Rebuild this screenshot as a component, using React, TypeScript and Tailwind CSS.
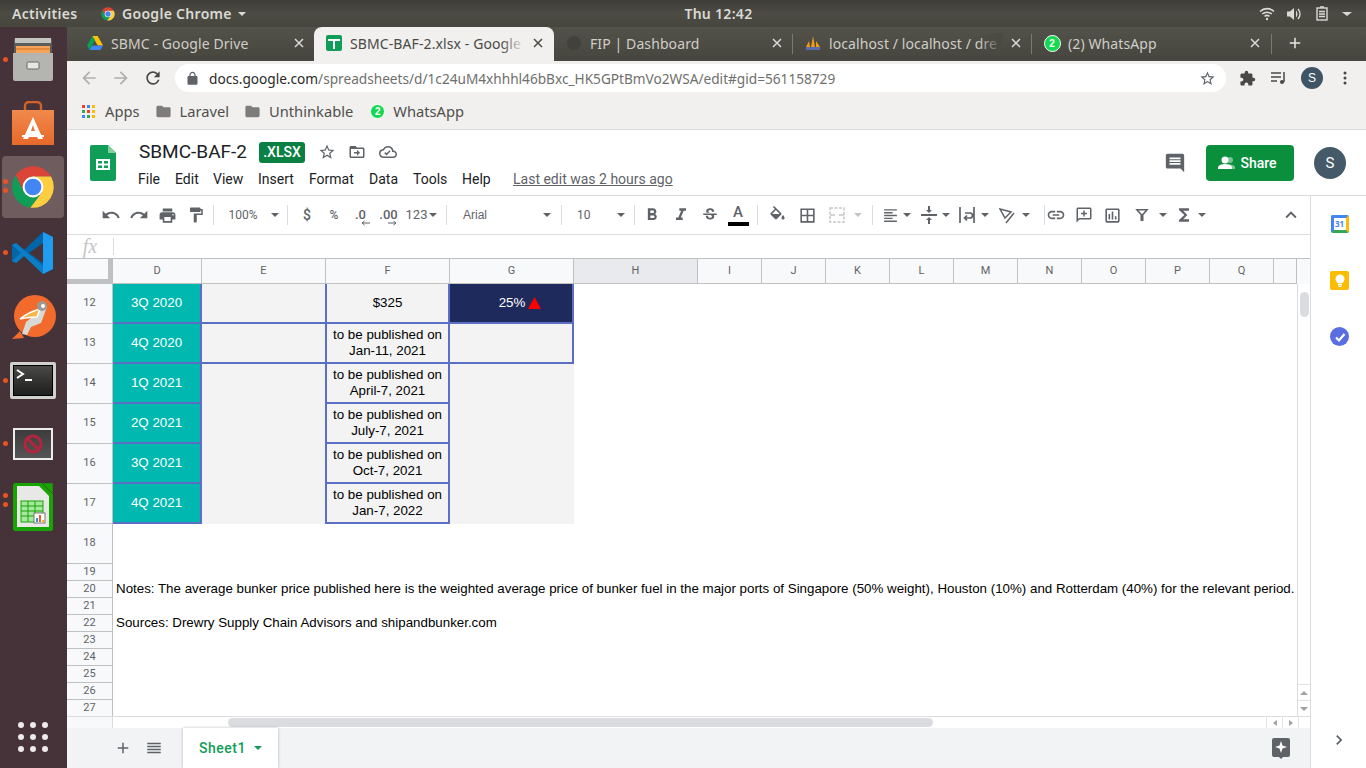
import React from 'react';

const ubuntu = "font-['Noto_Sans',sans-serif]";
const roboto = "font-['Roboto',sans-serif]";
const arial = "font-['Liberation_Sans',Arial,sans-serif]";

function M({ d, size = 18, className = '' }: { d: string; size?: number; className?: string }) {
  const color = className.includes('text-') ? '' : 'text-[#5f6368]';
  return (
    <svg width={size} height={size} viewBox="0 0 24 24" fill="currentColor" className={`shrink-0 ${color} ${className}`}>
      <path d={d} />
    </svg>
  );
}

function Caret({ className = 'border-t-[#5f6368]' }: { className?: string }) {
  return <div className={`w-0 h-0 shrink-0 border-x-[4px] border-x-transparent border-t-[4px] ${className}`} />;
}

function Box({ w, children }: { w: string; children?: React.ReactNode }) {
  return <div className={`${w} shrink-0 flex items-center justify-center`}>{children}</div>;
}

function Sep({ w }: { w: string }) {
  return (
    <div className={`${w} shrink-0 flex items-center justify-center`}>
      <div className="w-px h-[20px] bg-[#dadce0]" />
    </div>
  );
}

function ChromeLogo({ size }: { size: number }) {
  return (
    <svg width={size} height={size} viewBox="0 0 48 48" className="shrink-0">
      <path fill="#db4437" d="M24 14L41.32 14A20 20 0 0 0 7.5 12.7L15.3 29Z" />
      <path fill="#0f9d58" d="M15.3 29L7.5 12.7A20 20 0 0 0 21.5 43.8L32.66 29Z" />
      <path fill="#ffcd40" d="M32.66 29L21.5 43.8A20 20 0 0 0 41.32 14L24 14Z" />
      <circle cx="24" cy="24" r="10" fill="#fff" />
      <circle cx="24" cy="24" r="8" fill="#4285f4" />
    </svg>
  );
}

function WhatsAppBadge({ size }: { size: number }) {
  return (
    <div
      className={`shrink-0 rounded-full bg-[#12d94f] border-[1.5px] border-white flex items-center justify-center text-white text-[10px] font-bold ${arial} ${size === 18 ? 'w-[17px] h-[17px]' : 'w-[15px] h-[15px]'}`}
    >
      2
    </div>
  );
}

function TopBar() {
  return (
    <div className={`h-[27px] shrink-0 flex items-center bg-gradient-to-b from-[#3e3d38] via-[#4c4b44] to-[#46453e] text-[#dbdad4] text-[14px] font-semibold tracking-[0.3px] ${ubuntu}`}>
      <span className="ml-[12px] w-[88px]">Activities</span>
      <ChromeLogo size={16} />
      <span className="ml-[6px]">Google Chrome</span>
      <Caret className="ml-[6px] border-t-[#dbdad4]" />
      <div className="flex-1 flex justify-center pr-[56px]">
        <span className="ml-[-12px]">Thu 12:42</span>
      </div>
      <svg width="16" height="14" viewBox="0 0 16 14" className="shrink-0 mr-[12px]" fill="none" stroke="#dbdad4" strokeWidth="1.6">
        <path d="M1 4.500a10 10 0 0 1 14 0M3.300 7a7 7 0 0 1 9.400 0M5.600 9.400a3.600 3.600 0 0 1 4.800 0" />
        <circle cx="8" cy="12" r="1.2" fill="#dbdad4" stroke="none" />
      </svg>
      <svg width="16" height="14" viewBox="0 0 16 14" className="shrink-0 mr-[13px]" fill="#dbdad4">
        <path d="M0 4.500h3L7 1v12L3 9.500H0z" />
        <path d="M9 3.500a5 5 0 0 1 0 7zM11.500 1.500a8 8 0 0 1 0 11l-1-1a6.500 6.500 0 0 0 0-9z" />
      </svg>
      <svg width="12" height="15" viewBox="0 0 12 15" className="shrink-0 mr-[14px]" fill="none" stroke="#dbdad4" strokeWidth="1.4">
        <rect x="1" y="2" width="10" height="12" />
        <path d="M4 1h4M3 5.500h6M3 8h6M3 10.500h6" />
      </svg>
      <Caret className="mr-[14px] border-t-[#dbdad4] border-x-[5px]" />
    </div>
  );
}

function Dot({ top }: { top: string }) {
  return <div className={`absolute left-[3px] w-[5px] h-[5px] rounded-full bg-[#e95420] ${top}`} />;
}

function Dock() {
  return (
    <div className="w-[67px] shrink-0 bg-[#46333a] flex flex-col items-stretch pb-[15px] pr-[2px]">
      <div className="relative h-[63px] flex items-center justify-center">
        <Dot top="top-[30px]" />
        <svg width="42" height="44" viewBox="0 0 42 44">
          <rect x="2" y="1" width="38" height="20" rx="2" fill="#5c5c58" />
          <rect x="3" y="1" width="36" height="5" fill="#c4c4c0" />
          <rect x="4" y="9" width="34" height="7" fill="#f3a35c" />
          <rect x="4" y="11" width="34" height="2" fill="#e68a3c" />
          <path d="M1 16h40v26a2 2 0 0 1-2 2H3a2 2 0 0 1-2-2z" fill="#b4b4b0" />
          <rect x="15" y="25" width="12" height="7" rx="1" fill="#e6e6e2" stroke="#666" strokeWidth="1" />
        </svg>
      </div>
      <div className="h-[65px] flex items-center justify-center">
        <svg width="42" height="44" viewBox="0 0 42 44">
          <defs>
            <linearGradient id="bag" x1="0" y1="0" x2="0" y2="1">
              <stop offset="0" stopColor="#f08a4c" />
              <stop offset="1" stopColor="#e8682a" />
            </linearGradient>
          </defs>
          <path d="M13 10V5a4 4 0 0 1 4-4h8a4 4 0 0 1 4 4v5" fill="none" stroke="#d4602a" strokeWidth="2.400" />
          <path d="M0 9h42v35H0z" fill="url(#bag)" />
          <path d="M21 16l10 22h-5l-1.500-4h-7L16 38h-5zM21 24l-2 6h4z" fill="#fff" />
          <rect x="10" y="34" width="22" height="2" fill="#fff" />
        </svg>
      </div>
      <div className="h-[65px] flex items-center justify-center relative">
        <Dot top="top-[24px]" />
        <Dot top="top-[33px]" />
        <div className="w-[62px] h-[62px] rounded-[4px] bg-[#6f5c5f] flex items-center justify-center mb-[1px]">
          <ChromeLogo size={50} />
        </div>
      </div>
      <div className="relative h-[65px] flex items-center justify-center">
        <Dot top="top-[30px]" />
        <svg width="44" height="44" viewBox="0 0 44 44">
          <path fill="#0065a9" d="M32 1L13 19 5 12 1 14v16l4 2 8-7 19 18 10-5V6zM32 12v20L18 22z" fillRule="evenodd" />
          <path fill="#0c7dc4" d="M1 14l4-2 27 23v8L13 25l-8 7-4-2 9-8z" />
          <path fill="#1f9cf0" d="M32 1l10 5v32l-10 5z" />
        </svg>
      </div>
      <div className="h-[64px] flex items-center justify-center">
        <svg width="46" height="46" viewBox="0 0 46 46">
          <circle cx="25" cy="22" r="21" fill="#f26b2c" />
          <path d="M2 45l8-8 4 7z" fill="#f26b2c" />
          <path d="M12 40l4-12 10-8 5-9 6 2-6 16-10 4-4 8z" fill="#d8d8d4" />
          <path d="M10 25c6-5 12-8 20-10l-3 8c-6 0-12 1-17 2z" fill="#f7b64a" stroke="#fff" strokeWidth="1.500" />
          <circle cx="32" cy="12" r="5" fill="#9a9a96" />
          <circle cx="33" cy="12" r="2" fill="#fff" />
        </svg>
      </div>
      <div className="relative h-[63px] flex items-center justify-center">
        <Dot top="top-[29px]" />
        <div className="w-[46px] h-[37px] bg-[#d0d0cc] rounded-[2px] p-[3px]">
          <div className="w-full h-full bg-gradient-to-b from-[#4a4a48] to-[#1e1e1e] border border-black flex items-start">
            <svg width="20" height="20" viewBox="0 0 20 20">
              <path d="M3 4l6 4-6 4" fill="none" stroke="#fff" strokeWidth="2" />
              <path d="M11 14h7" stroke="#fff" strokeWidth="2" />
            </svg>
          </div>
        </div>
      </div>
      <div className="relative h-[63px] flex items-center justify-center">
        <Dot top="top-[29px]" />
        <div className="w-[40px] h-[32px] bg-[#ececea] p-[2px]">
          <div className="w-full h-full bg-gradient-to-b from-[#3c3c3c] to-[#555] flex items-center justify-center">
            <svg width="20" height="20" viewBox="0 0 20 20" fill="none" stroke="#b5243e" strokeWidth="3">
              <circle cx="10" cy="10" r="8" />
              <path d="M4.500 4.500l11 11" />
            </svg>
          </div>
        </div>
      </div>
      <div className="relative h-[63px] flex items-center justify-center">
        <Dot top="top-[18px]" />
        <Dot top="top-[27px]" />
        <svg width="40" height="48" viewBox="0 0 40 48">
          <path d="M2 0h27l11 11v35a2 2 0 0 1-2 2H2a2 2 0 0 1-2-2V2a2 2 0 0 1 2-2z" fill="#18a303" />
          <path d="M4 3h22l10 10v31H4z" fill="#e8e8e6" />
          <path d="M29 0h11v11z" fill="#18a303" stroke="#46333a" strokeWidth="0.5" />
          <rect x="8" y="18" width="22" height="21" fill="#a5e8a0" stroke="#18a303" strokeWidth="1" />
          <path d="M8 23h22M8 28h22M8 33h22M15 18v21M22 18v21" stroke="#18a303" strokeWidth="1" />
          <rect x="21" y="30" width="11" height="10" fill="#fff" stroke="#777" strokeWidth="1" />
          <rect x="23" y="35" width="2" height="4" fill="#3c8cd0" />
          <rect x="26" y="32" width="2" height="7" fill="#e8632a" />
          <rect x="29" y="37" width="2" height="2" fill="#e8b52a" />
        </svg>
      </div>
      <div className="mt-auto self-center grid grid-cols-3 gap-[6px] mb-[1px]">
        {Array.from({ length: 9 }).map((_, i) => (
          <div key={i} className="w-[6px] h-[6px] rounded-full bg-[#ecebea]" />
        ))}
      </div>
    </div>
  );
}

function Tab({ title, icon, active, sep, width, fade, first }: { title: string; icon: React.ReactNode; active?: boolean; sep?: boolean; width: string; fade?: boolean; first?: boolean }) {
  return (
    <div className={`${width} shrink-0 h-[34px] flex items-center pb-[2px] ${first ? 'pl-[20px] pr-[10px]' : 'pl-[12px] pr-[11px]'} ${active ? 'bg-[#f1f0ee] rounded-t-[8px] text-[#4a4a46]' : 'text-[#cfcec8]'} relative`}>
      <div className="w-[16px] flex justify-center shrink-0">{icon}</div>
      <div className="relative ml-[8px] flex-1 overflow-hidden whitespace-nowrap">
        {title}
        {fade && <div className={`absolute right-0 top-0 bottom-0 w-[24px] bg-gradient-to-r ${active ? 'from-transparent to-[#f1f0ee]' : 'from-transparent to-[#4a4942]'}`} />}
      </div>
      <svg width="10" height="10" viewBox="0 0 10 10" className="ml-[8px] shrink-0" stroke={active ? '#4a4a46' : '#dcdbd6'} strokeWidth="1.500">
        <path d="M1 1l8 8M9 1l-8 8" />
      </svg>
      {sep && <div className="absolute right-0 top-[7px] w-px h-[20px] bg-[#7a7972]" />}
    </div>
  );
}

function TabStrip() {
  return (
    <div className={`h-[34px] shrink-0 flex bg-gradient-to-b from-[#53524a] to-[#46453e] text-[14px] tracking-[0.1px] ${ubuntu}`}>
      <Tab
        first
        width="w-[247px]"
        title="SBMC - Google Drive"
        icon={
          <svg width="16" height="15" viewBox="0 0 16 15">
            <path d="M5.300 0h5.400l5.300 9.500h-5.300z" fill="#ffc107" />
            <path d="M5.300 0L0 9.500 2.600 14 8 4.500z" fill="#0f9d58" />
            <path d="M2.600 14h10.800L16 9.500H5.300z" fill="#4285f4" />
          </svg>
        }
      />
      <Tab
        active
        fade
        width="w-[240px]"
        title="SBMC-BAF-2.xlsx - Google"
        icon={
          <div className="w-[16px] h-[16px] rounded-[2px] bg-[#0f9d58] flex items-center justify-center">
            <svg width="12" height="12" viewBox="0 0 12 12" fill="#fff">
              <path d="M0 2h12v2H7v8H5V4H0z" />
            </svg>
          </div>
        }
      />
      <Tab sep width="w-[239px]" title="FIP | Dashboard" icon={<div className="w-[14px] h-[14px] rounded-full bg-[#42413b]" />} />
      <Tab
        sep
        fade
        width="w-[239px]"
        title="localhost / localhost / dre"
        icon={
          <svg width="16" height="16" viewBox="0 0 16 16">
            <path d="M1 12L4 6l1 6zM6 12l2-11 2 11zM11 12l0-6 4 6z" fill="#f39c12" />
            <rect x="1" y="12" width="14" height="3" fill="#5b6bb0" />
          </svg>
        }
      />
      <Tab width="w-[239px]" title="(2) WhatsApp" icon={<WhatsAppBadge size={18} />} />
      <div className="w-px h-[20px] mt-[7px] bg-[#7a7972]" />
      <div className="ml-[14px] flex items-center pb-[2px]">
        <M size={18} className="text-[#e8e7e2]" d="M19 13h-6v6h-2v-6H5v-2h6V5h2v6h6z" />
      </div>
    </div>
  );
}

function NavBar() {
  return (
    <div className={`h-[34px] shrink-0 bg-[#f1f0ee] flex items-center text-[13.65px] ${ubuntu}`}>
      <M className="ml-[12px] text-[#b0afac]" size={20} d="M20 11H7.830l5.590-5.590L12 4l-8 8 8 8 1.410-1.410L7.830 13H20v-2z" />
      <M className="ml-[12px] text-[#b0afac]" size={20} d="M12 4l-1.410 1.410L16.170 11H4v2h12.170l-5.580 5.590L12 20l8-8z" />
      <M className="ml-[12px] text-[#484846]" size={20} d="M17.650 6.350A7.958 7.958 0 0 0 12 4c-4.420 0-7.990 3.580-7.990 8s3.570 8 7.990 8c3.730 0 6.840-2.550 7.730-6h-2.080A5.990 5.990 0 0 1 12 18c-3.310 0-6-2.690-6-6s2.690-6 6-6c1.660 0 3.140.690 4.220 1.780L13 11h7V4l-2.350 2.350z" />
      <div className="ml-[12px] w-[1051px] h-[28px] bg-white rounded-full flex items-center">
        <M className="ml-[10px] text-[#5f6368]" size={15} d="M18 8h-1V6c0-2.760-2.240-5-5-5S7 3.240 7 6v2H6c-1.100 0-2 .9-2 2v10c0 1.100.9 2 2 2h12c1.100 0 2-.9 2-2V10c0-1.100-.9-2-2-2zM9 6c0-1.660 1.340-3 3-3s3 1.340 3 3v2H9V6z" />
        <span className="ml-[9px] pt-[2px] whitespace-nowrap text-[#6f6f6c]">
          <span className="text-[#2a2a28]">docs.google.com</span>/spreadsheets/d/1c24uM4xhhhl46bBxc_HK5GPtBmVo2WSA/edit#gid=561158729
        </span>
        <M className="ml-auto mr-[10px] text-[#5f6368]" size={17} d="M22 9.240l-7.190-.62L12 2 9.190 8.630 2 9.240l5.460 4.730L5.820 21 12 17.270 18.180 21l-1.630-7.030L22 9.240zM12 15.400l-3.760 2.270 1-4.280-3.320-2.880 4.380-.38L12 6.100l1.710 4.040 4.380.38-3.320 2.880 1 4.280L12 15.400z" />
      </div>
      <M className="ml-[13px] text-[#484846]" size={17} d="M20.500 11H19V7c0-1.100-.9-2-2-2h-4V3.500a2.500 2.500 0 0 0-5 0V5H4c-1.100 0-1.990.9-1.990 2v3.800H3.500c1.490 0 2.700 1.210 2.700 2.700s-1.210 2.700-2.700 2.700H2V20c0 1.100.9 2 2 2h3.800v-1.500c0-1.490 1.210-2.700 2.700-2.700s2.700 1.210 2.700 2.700V22H17c1.100 0 2-.9 2-2v-4h1.500a2.500 2.500 0 0 0 0-5z" />
      <svg width="16" height="14" viewBox="0 0 16 14" className="ml-[15px] shrink-0" stroke="#484846" strokeWidth="1.500" fill="none">
        <path d="M0 2h10M0 6h10M0 10h6M13 1v10" />
        <circle cx="11" cy="11" r="2" fill="#484846" stroke="none" />
      </svg>
      <div className={`ml-[14px] w-[22px] h-[22px] rounded-full bg-[#3f5566] text-white text-[12px] flex items-center justify-center ${arial}`}>S</div>
      <svg width="4" height="14" viewBox="0 0 4 14" className="ml-[20px] shrink-0" fill="#484846">
        <circle cx="2" cy="2" r="1.500" />
        <circle cx="2" cy="7" r="1.500" />
        <circle cx="2" cy="12" r="1.500" />
      </svg>
    </div>
  );
}

function Folder({ className }: { className: string }) {
  return <M size={17} className={`text-[#7c7c7a] ${className}`} d="M10 4H4c-1.100 0-2 .9-2 2v12c0 1.100.9 2 2 2h16c1.100 0 2-.9 2-2V8c0-1.100-.9-2-2-2h-8l-2-2z" />;
}

function Bookmarks() {
  const dots = ['bg-[#ea4335]', 'bg-[#4285f4]', 'bg-[#fbbc05]', 'bg-[#34a853]', 'bg-[#ea4335]', 'bg-[#fbbc05]', 'bg-[#4285f4]', 'bg-[#34a853]', 'bg-[#fbbc05]'];
  return (
    <div className={`h-[35px] shrink-0 bg-[#f1f0ee] border-b border-[#dadce0] flex items-center pb-[2px] text-[14.7px] text-[#4f4f4c] ${ubuntu}`}>
      <div className="ml-[15px] grid grid-cols-3 gap-[2px]">
        {dots.map((c, i) => (
          <div key={i} className={`w-[3px] h-[3px] ${c}`} />
        ))}
      </div>
      <span className="ml-[10px]">Apps</span>
      <Folder className="ml-[15px]" />
      <span className="ml-[8px]">Laravel</span>
      <Folder className="ml-[15px]" />
      <span className="ml-[8px]">Unthinkable</span>
      <div className="ml-[17px]">
        <WhatsAppBadge size={15} />
      </div>
      <span className="ml-[8px]">WhatsApp</span>
    </div>
  );
}

function DocHeader() {
  const menus: [string, string][] = [
    ['File', 'w-[37px]'],
    ['Edit', 'w-[38px]'],
    ['View', 'w-[45px]'],
    ['Insert', 'w-[51px]'],
    ['Format', 'w-[60px]'],
    ['Data', 'w-[44px]'],
    ['Tools', 'w-[49px]'],
    ['Help', 'w-[51px]'],
  ];
  return (
    <div className={`h-[66px] shrink-0 bg-white border-b border-[#dadce0] flex items-start ${roboto}`}>
      <svg width="26" height="36" viewBox="0 0 26 36" className="ml-[23px] mt-[15px] shrink-0">
        <path d="M2 0h16l8 8v26a2 2 0 0 1-2 2H2a2 2 0 0 1-2-2V2a2 2 0 0 1 2-2z" fill="#0f9d58" />
        <path d="M18 0l8 8h-8z" fill="#87ce9b" />
        <path d="M6 14h14v11H6zM8 16v2.500h4V16zM14 16v2.500h4V16zM8 20.500V23h4v-2.500zM14 20.500V23h4v-2.500z" fill="#fff" fillRule="evenodd" />
      </svg>
      <div className="ml-[23px] flex-1">
        <div className="flex items-center h-[26px] mt-[9px]">
          <span className="text-[19px] leading-[24px] text-[#202124]">SBMC-BAF-2</span>
          <span className="ml-[12px] w-[46px] h-[21px] rounded-[3px] bg-[#0b8043] text-white text-[14px] font-medium flex items-center justify-center">.XLSX</span>
          <M className="ml-[13px]" size={18} d="M22 9.240l-7.190-.62L12 2 9.190 8.630 2 9.240l5.460 4.730L5.820 21 12 17.270 18.180 21l-1.630-7.030L22 9.240zM12 15.400l-3.760 2.270 1-4.280-3.320-2.880 4.380-.38L12 6.100l1.710 4.040 4.380.38-3.320 2.880 1 4.280L12 15.400z" />
          <M className="ml-[12px]" size={18} d="M20 6h-8l-2-2H4c-1.100 0-2 .9-2 2v12c0 1.100.9 2 2 2h16c1.100 0 2-.9 2-2V8c0-1.100-.9-2-2-2zm0 12H4V8h16v10zm-8-1l4-4-4-4v3H8v2h4v3z" />
          <M className="ml-[13px]" size={18} d="M19.350 10.040A7.490 7.490 0 0 0 12 4C9.110 4 6.600 5.640 5.350 8.040A5.994 5.994 0 0 0 0 14c0 3.310 2.690 6 6 6h13c2.760 0 5-2.240 5-5 0-2.640-2.050-4.780-4.650-4.960zM19 18H6c-2.210 0-4-1.790-4-4s1.790-4 4-4h.71C7.370 7.690 9.480 6 12 6c3.040 0 5.500 2.460 5.500 5.500v.5H19c1.660 0 3 1.340 3 3s-1.340 3-3 3zm-9-1.500l-3-3 1.400-1.400 1.600 1.600 4.100-4.100 1.400 1.400z" />
        </div>
        <div className="flex items-center h-[20px] mt-[4px] ml-[-1px] text-[14px] text-[#202124]">
          {menus.map(([m, w]) => (
            <span key={m} className={`${w} shrink-0`}>{m}</span>
          ))}
          <span className="text-[#5f6368] underline">Last edit was 2 hours ago</span>
        </div>
      </div>
      <M className="mt-[22px] mr-[20px]" size={22} d="M21.990 4c0-1.100-.89-2-1.990-2H4c-1.100 0-2 .9-2 2v12c0 1.100.9 2 2 2h14l4 4-.01-18zM18 14H6v-2h12v2zm0-3H6V9h12v2zm0-3H6V6h12v2z" />
      <div className="mt-[15px] w-[88px] h-[36px] pr-[5px] rounded-[4px] bg-[#0a8f3d] text-white text-[14px] font-medium flex items-center justify-center">
        <svg width="18" height="18" viewBox="0 0 18 18" className="mr-[4px] shrink-0">
          <circle cx="12" cy="6" r="3" fill="#7cc296" />
          <path d="M10 10.500c3-.5 7 .5 7 3V15h-5z" fill="#7cc296" />
          <circle cx="7" cy="6" r="3.500" fill="#fff" />
          <path d="M0 15v-1.500C0 11 4.500 10 7 10s7 1 7 3.500V15z" fill="#fff" />
        </svg>
        Share
      </div>
      <div className="mt-[17px] ml-[20px] mr-[20px] w-[32px] h-[32px] rounded-full bg-[#455a68] text-white text-[15px] flex items-center justify-center">S</div>
    </div>
  );
}

function Toolbar() {
  const ic = 'text-[#5f6368]';
  return (
    <div className={`h-[39px] shrink-0 flex items-center pl-[29px] pr-[8px] border-b border-[#dadce0] bg-white text-[12px] text-[#5f6368] ${roboto}`}>
      <Box w="w-[29px]"><M size={20} d="M12.500 8c-2.650 0-5.050.99-6.900 2.600L2 7v9h9l-3.620-3.620c1.390-1.160 3.160-1.880 5.120-1.880 3.540 0 6.550 2.310 7.600 5.500l2.370-.78C21.080 11.030 17.150 8 12.500 8z" /></Box>
      <Box w="w-[28px]"><M size={20} d="M18.400 10.600C16.550 8.990 14.150 8 11.500 8c-4.650 0-8.580 3.030-9.960 7.220L3.900 16c1.050-3.190 4.050-5.500 7.600-5.500 1.950 0 3.730.72 5.120 1.880L13 16h9V7l-3.600 3.600z" /></Box>
      <Box w="w-[29px]"><M size={19} d="M19 8H5c-1.660 0-3 1.340-3 3v6h4v4h12v-4h4v-6c0-1.660-1.340-3-3-3zm-3 11H8v-5h8v5zm3-7c-.55 0-1-.45-1-1s.45-1 1-1 1 .45 1 1-.45 1-1 1zm-1-9H6v4h12V3z" /></Box>
      <Box w="w-[28px]"><M size={18} d="M18 4V3c0-.55-.45-1-1-1H5c-.55 0-1 .45-1 1v4c0 .55.45 1 1 1h12c.55 0 1-.45 1-1V6h1v4H9v11c0 .55.45 1 1 1h2c.55 0 1-.45 1-1v-9h8V4h-3z" /></Box>
      <Sep w="w-[6px]" />
      <Box w="w-[54px]">100%</Box>
      <Box w="w-[10px]"><Caret /></Box>
      <Sep w="w-[14px]" />
      <Box w="w-[26px]"><span className="text-[14px] font-medium">$</span></Box>
      <Box w="w-[28px]"><span className="font-medium">%</span></Box>
      <Box w="w-[25px]">
        <div className="relative font-medium text-[13px] leading-[14px]">
          .0
          <svg width="9" height="6" viewBox="0 0 9 6" className="absolute left-[6px] top-[12px]" fill="none" stroke="#5f6368"><path d="M9 3H2M3.500 1L1 3l2.500 2" /></svg>
        </div>
      </Box>
      <Box w="w-[31px]">
        <div className="relative font-medium text-[13px] leading-[14px]">
          .00
          <svg width="9" height="6" viewBox="0 0 9 6" className="absolute left-[9px] top-[12px]" fill="none" stroke="#5f6368"><path d="M0 3h7M5.500 1L8 3 5.500 5" /></svg>
        </div>
      </Box>
      <Box w="w-[25px]"><span className="text-[13px]">123</span></Box>
      <Box w="w-[8px]"><Caret /></Box>
      <Sep w="w-[18px]" />
      <div className={`w-[87px] shrink-0 pl-[8px] ${arial}`}>Arial</div>
      <Box w="w-[10px]"><Caret /></Box>
      <Sep w="w-[18px]" />
      <div className="w-[42px] shrink-0 pl-[7px]">10</div>
      <Box w="w-[18px]"><Caret /></Box>
      <Sep w="w-[8px]" />
      <Box w="w-[28px]"><M size={20} d="M15.600 10.790c.97-.67 1.650-1.770 1.650-2.790 0-2.260-1.750-4-4-4H7v14h7.040c2.090 0 3.710-1.700 3.710-3.790 0-1.520-.86-2.820-2.150-3.420zM10 6.500h3c.83 0 1.500.67 1.500 1.500s-.67 1.500-1.500 1.500h-3v-3zm3.500 9H10v-3h3.500c.83 0 1.500.67 1.500 1.500s-.67 1.500-1.500 1.500z" /></Box>
      <Box w="w-[30px]"><M size={20} d="M10 4v3h2.210l-3.420 8H6v3h8v-3h-2.210l3.420-8H18V4z" /></Box>
      <Box w="w-[27px]"><M size={18} d="M7.240 8.750c-.26-.48-.39-1.030-.39-1.670 0-.61.13-1.160.4-1.670.26-.5.63-.93 1.110-1.290.48-.35 1.050-.63 1.700-.83.66-.19 1.390-.29 2.180-.29.81 0 1.540.11 2.210.34.66.22 1.230.54 1.690.94.47.4.83.88 1.080 1.430s.38 1.150.38 1.810h-3.010c0-.31-.05-.59-.15-.85-.09-.27-.24-.49-.44-.68-.2-.19-.45-.33-.75-.44-.3-.1-.66-.16-1.060-.16-.39 0-.74.04-1.030.13s-.53.21-.72.36c-.19.16-.34.34-.44.55-.1.21-.15.43-.15.66 0 .48.25.88.74 1.210.38.25.77.48 1.410.7H7.390c-.05-.08-.11-.17-.15-.25zM21 12v-2H3v2h9.620c.18.07.4.14.55.2.37.17.66.34.87.51s.35.36.43.57c.07.2.11.43.11.69 0 .23-.05.45-.14.66-.09.2-.23.38-.42.53-.19.15-.42.26-.71.35-.29.08-.63.13-1.010.13-.43 0-.83-.04-1.180-.13s-.66-.23-.91-.42c-.25-.19-.45-.44-.59-.75s-.25-.76-.25-1.210H6.400c0 .55.08 1.130.24 1.580s.37.85.65 1.210c.28.35.6.66.98.92.37.26.78.48 1.220.65.44.17.9.3 1.380.39.48.08.96.13 1.440.13.8 0 1.530-.09 2.180-.28s1.210-.45 1.670-.79c.46-.34.82-.77 1.070-1.270s.38-1.070.38-1.710c0-.6-.1-1.140-.31-1.610-.05-.11-.11-.23-.17-.33H21z" /></Box>
      <Box w="w-[30px]">
        <div className="flex flex-col items-center">
          <span className="text-[15px] leading-[15px] font-medium">A</span>
          <div className="w-[21px] h-[4px] mt-[2px] bg-black" />
        </div>
      </Box>
      <Sep w="w-[8px]" />
      <Box w="w-[32px]"><M size={19} d="M16.560 8.940L7.620 0 6.210 1.410l2.380 2.380-5.150 5.150c-.59.59-.59 1.540 0 2.120l5.500 5.500c.29.29.68.44 1.060.44s.77-.15 1.060-.44l5.500-5.500c.59-.58.59-1.530 0-2.120zM5.210 10L10 5.210 14.790 10H5.210zM19 11.500s-2 2.170-2 3.500c0 1.100.9 2 2 2s2-.9 2-2c0-1.330-2-3.500-2-3.500z" /></Box>
      <Box w="w-[28px]"><M size={19} d="M3 3v18h18V3H3zm8 16H5v-6h6v6zm0-8H5V5h6v6zm8 8h-6v-6h6v6zm0-8h-6V5h6v6z" /></Box>
      <Box w="w-[32px]">
        <svg width="16" height="16" viewBox="0 0 16 16" fill="none" stroke="#c4c7c5" strokeWidth="1.500" strokeDasharray="3 1.500">
          <rect x="1" y="1" width="14" height="14" />
          <path d="M1 8h5M10 8h5" strokeDasharray="none" />
        </svg>
      </Box>
      <Box w="w-[10px]"><Caret className="border-t-[#c4c7c5]" /></Box>
      <Sep w="w-[18px]" />
      <M className="ml-[1px]" size={17} d="M15 15H3v2h12v-2zm0-8H3v2h12V7zM3 13h18v-2H3v2zm0 8h18v-2H3v2zM3 3v2h18V3H3z" />
      <Caret className="ml-[4px]" />
      <svg width="16" height="18" viewBox="0 0 16 18" className={`ml-[10px] shrink-0 ${ic}`} fill="currentColor">
        <path d="M8 7L5 4h2V0h2v4h2zM0 8h16v2H0zM8 11l3 3H9v4H7v-4H5z" />
      </svg>
      <Caret className="ml-[5px]" />
      <svg width="16" height="16" viewBox="0 0 16 16" className={`ml-[9px] shrink-0 ${ic}`} fill="none" stroke="currentColor" strokeWidth="1.700">
        <path d="M1 0v16M15 0v16M6 6h5a2 2 0 0 1 0 5H6M8 8.500L5.500 11 8 13.500" />
      </svg>
      <Caret className="ml-[6px]" />
      <svg width="16" height="17" viewBox="0 0 16 17" className={`ml-[10px] shrink-0 ${ic}`} fill="none" stroke="currentColor" strokeWidth="1.500">
        <path d="M1 2l11 3-6 6zM7 16L15 6" />
      </svg>
      <Caret className="ml-[7px]" />
      <Sep w="w-[28px]" />
      <M className="ml-[-12px]" size={20} d="M3.900 12c0-1.710 1.390-3.100 3.100-3.100h4V7H7c-2.760 0-5 2.240-5 5s2.240 5 5 5h4v-1.900H7c-1.710 0-3.100-1.390-3.100-3.100zM8 13h8v-2H8v2zm9-6h-4v1.900h4c1.710 0 3.100 1.390 3.100 3.100s-1.390 3.100-3.100 3.100h-4V17h4c2.760 0 5-2.240 5-5s-2.240-5-5-5z" />
      <M className="ml-[9px]" size={18} d="M20 2H4c-1.100 0-2 .9-2 2v18l4-4h14c1.100 0 2-.9 2-2V4c0-1.100-.9-2-2-2zm0 14H5.200L4 17.200V4h16v12zM11 6h2v3h3v2h-3v3h-2v-3H8V9h3z" />
      <M className="ml-[10px]" size={19} d="M19 3H5c-1.100 0-2 .9-2 2v14c0 1.100.9 2 2 2h14c1.100 0 2-.9 2-2V5c0-1.100-.9-2-2-2zm0 16H5V5h14v14zM7 10h2v7H7zM11 7h2v10h-2zM15 13h2v4h-2z" />
      <M className="ml-[11px]" size={18} d="M3 4h18l-7 8v8h-4v-8zM7.500 6L12 11l4.500-5z" />
      <Caret className="ml-[8px]" />
      <M className="ml-[7px]" size={20} d="M18 4H6v2l6.500 6L6 18v2h12v-3h-7l5-5-5-5h7z" />
      <Caret className="ml-[4px] border-x-[3px] border-t-[3px]" />
      <M className="ml-auto" size={22} d="M12 8l-6 6 1.410 1.410L12 10.830l4.590 4.580L18 14z" />
    </div>
  );
}

function FormulaBar() {
  return (
    <div className="h-[23px] shrink-0 flex items-center bg-white">
      <span className="w-[46px] text-center text-[20px] leading-[23px] italic text-[#c4c6c8] font-['Liberation_Serif',serif]">fx</span>
      <div className="w-px h-[17px] bg-[#dadce0]" />
    </div>
  );
}

const colHead = 'h-[25px] shrink-0 flex items-center justify-center border-r border-b border-[#c0c0c0] text-[11px] text-[#5f6368]';

function ColumnHeaders() {
  const narrow = ['I', 'J', 'K', 'L', 'M', 'N', 'O', 'P', 'Q'];
  return (
    <div className={`flex shrink-0 border-t border-[#c0c0c0] bg-[#f8f9fa] ${roboto}`}>
      <div className="w-[46px] h-[25px] shrink-0 bg-[#f8f9fa] border-r-[5px] border-b-[5px] border-[#c0c0c0]" />
      <div className={`${colHead} w-[89px]`}>D</div>
      <div className={`${colHead} w-[124px]`}>E</div>
      <div className={`${colHead} w-[124px]`}>F</div>
      <div className={`${colHead} w-[124px]`}>G</div>
      <div className={`${colHead} w-[124px] bg-[#e8eaed]`}>H</div>
      {narrow.map((c) => (
        <div key={c} className={`${colHead} w-[64px]`}>{c}</div>
      ))}
      <div className={`${colHead} w-[23px]`} />
    </div>
  );
}

function RowNum({ n, h }: { n: number; h: string }) {
  return (
    <div className={`w-[46px] ${h} shrink-0 flex items-center justify-center bg-[#f8f9fa] border-r border-b border-[#c0c0c0] text-[11px] text-[#5f6368] ${roboto}`}>
      {n}
    </div>
  );
}

const cell = `h-[40px] shrink-0 flex items-center justify-center text-center text-[13.33px] leading-[16px] ${arial}`;
const teal = `${cell} w-[89px] bg-[#00b8b0] text-white border-[#5b70c4] border-r-2 border-b-2`;
const colE = `${cell} w-[123px] bg-[#f3f3f3] border-[#5b70c4]`;
const colF = `${cell} w-[125px] bg-[#f3f3f3] text-black border-[#5b70c4] border-x-2 border-b-2`;
const colG = `${cell} w-[124px] bg-[#f3f3f3] border-[#5b70c4]`;

function DataRow({ n, q, f }: { n: number; q: string; f: React.ReactNode }) {
  return (
    <div className="flex">
      <RowNum n={n} h="h-[40px]" />
      <div className={teal}>{q}</div>
      <div className={colE} />
      <div className={colF}>{f}</div>
      <div className={colG} />
    </div>
  );
}

function Grid() {
  const plain = [19, 20, 21, 22, 23, 24, 25, 26, 27];
  const notes: Record<number, string> = {
    20: 'Notes: The average bunker price published here is the weighted average price of bunker fuel in the major ports of Singapore (50% weight), Houston (10%) and Rotterdam (40%) for the relevant period.',
    22: 'Sources: Drewry Supply Chain Advisors and shipandbunker.com',
  };
  return (
    <div className="flex flex-1 min-h-0">
      <div className="w-[1230px] shrink-0 overflow-hidden">
        <div className="flex">
          <RowNum n={12} h="h-[40px]" />
          <div className={teal}>3Q 2020</div>
          <div className={`${colE} border-b-2`} />
          <div className={colF}>$325</div>
          <div className={`${cell} w-[124px] pl-[18px] bg-[#1f2a5c] text-white border-r-2 border-b-2 border-[#5b70c4]`}>
            25%
            <svg width="13" height="12" viewBox="0 0 13 12" className="ml-[3px]"><path d="M6.500 0L13 12H0z" fill="#ff0000" /></svg>
          </div>
        </div>
        <div className="flex">
          <RowNum n={13} h="h-[40px]" />
          <div className={teal}>4Q 2020</div>
          <div className={`${colE} border-b-2`} />
          <div className={colF}>to be published on<br />Jan-11, 2021</div>
          <div className={`${colG} border-r-2 border-b-2`} />
        </div>
        <DataRow n={14} q="1Q 2021" f={<>to be published on<br />April-7, 2021</>} />
        <DataRow n={15} q="2Q 2021" f={<>to be published on<br />July-7, 2021</>} />
        <DataRow n={16} q="3Q 2021" f={<>to be published on<br />Oct-7, 2021</>} />
        <DataRow n={17} q="4Q 2021" f={<>to be published on<br />Jan-7, 2022</>} />
        <RowNum n={18} h="h-[40px]" />
        {plain.map((n) => (
          <div key={n} className="flex">
            <RowNum n={n} h="h-[17px]" />
            {notes[n] && <div className={`pl-[3px] h-[17px] whitespace-nowrap text-[13.33px] leading-[16px] text-black ${arial}`}>{notes[n]}</div>}
          </div>
        ))}
      </div>
      <div className="flex-1 flex flex-col border-l border-[#dadce0] bg-white">
        <div className="h-[25px] ml-[2px] mt-[8px] w-[9px] rounded-full bg-[#dadce0]" />
        <div className="flex-1" />
        <div className="h-[16px] border-t border-[#e3e3e3] flex items-center justify-center">
          <div className="w-0 h-0 border-x-[4px] border-x-transparent border-b-[4px] border-b-[#a0a0a0]" />
        </div>
        <div className="h-[16px] border-t border-[#e3e3e3] flex items-center justify-center">
          <Caret className="border-t-[#a0a0a0]" />
        </div>
      </div>
    </div>
  );
}

function HScroll() {
  return (
    <div className="h-[12px] shrink-0 flex bg-white border-t border-[#dadce0]">
      <div className="w-[46px] shrink-0 bg-[#f8f9fa] border-r border-[#dadce0]" />
      <div className="ml-[115px] mt-[1px] w-[705px] h-[9px] rounded-full bg-[#dadce0]" />
      <div className="flex-1" />
      <div className="w-[16px] border-l border-[#e3e3e3] flex items-center justify-center">
        <div className="w-0 h-0 border-y-[3px] border-y-transparent border-r-[4px] border-r-[#a0a0a0]" />
      </div>
      <div className="w-[16px] border-l border-[#e3e3e3] flex items-center justify-center">
        <div className="w-0 h-0 border-y-[3px] border-y-transparent border-l-[4px] border-l-[#a0a0a0]" />
      </div>
      <div className="w-[12px] border-l border-[#e3e3e3]" />
    </div>
  );
}

function SheetBar() {
  return (
    <div className={`h-[40px] shrink-0 flex bg-[#f1f3f4] ${roboto}`}>
      <div className="flex items-center">
        <M className="ml-[47px]" size={18} d="M19 13h-6v6h-2v-6H5v-2h6V5h2v6h6z" />
        <M className="ml-[13px]" size={18} d="M3 5h18v2H3zM3 9h18v2H3zM3 13h18v2H3zM3 17h18v2H3z" />
      </div>
      <div className="ml-[20px] w-[95px] bg-white shadow-[0_0_3px_rgba(0,0,0,0.25)] flex items-center pl-[16px]">
        <span className="text-[14px] font-medium text-[#0f9d58] tracking-[0.5px]">Sheet1</span>
        <Caret className="ml-[8px] border-t-[#0f9d58]" />
      </div>
      <div className="flex-1" />
      <div className="flex items-center mr-[20px]">
        <svg width="18" height="21" viewBox="0 0 18 21">
          <path d="M2 0h14a2 2 0 0 1 2 2v15a2 2 0 0 1-2 2h-5l-2 2-2-2H2a2 2 0 0 1-2-2V2a2 2 0 0 1 2-2z" fill="#5f6368" />
          <path d="M9 3l1.500 4.500L15 9l-4.500 1.500L9 15l-1.500-4.500L3 9l4.500-1.500z" fill="#fff" />
        </svg>
      </div>
    </div>
  );
}

function SidePanel() {
  return (
    <div className="w-[56px] shrink-0 bg-white border-l border-[#dadce0] flex flex-col items-center pl-[2px]">
      <div className="mt-[19px] w-[18px] h-[18px] rounded-[2px] border-[3px] border-[#4285f4] border-b-[#34a853] border-r-[#fbbc05] flex items-center justify-center bg-white text-[8px] text-[#4285f4] font-bold">31</div>
      <div className="mt-[38px] w-[19px] h-[19px] rounded-[2px] bg-[#fbbc04] flex items-center justify-center">
        <svg width="10" height="14" viewBox="0 0 10 14" fill="#fff"><circle cx="5" cy="5" r="4.500" /><rect x="3" y="10" width="4" height="1.500" /><rect x="3.500" y="12" width="3" height="1" /></svg>
      </div>
      <div className="mt-[37px] w-[19px] h-[19px] rounded-full bg-[#5b6ee1] flex items-center justify-center">
        <svg width="12" height="12" viewBox="0 0 12 12" fill="none" stroke="#fff" strokeWidth="2.200"><path d="M2 6.500L5 9.500 10.500 3" /></svg>
      </div>
      <div className="mt-auto mb-[18px] mr-[2px]">
        <M size={20} d="M10 6L8.590 7.410 13.170 12l-4.580 4.590L10 18l6-6z" />
      </div>
    </div>
  );
}

export default function App() {
  return (
    <div className="w-[1366px] h-[768px] overflow-hidden flex flex-col bg-white">
      <TopBar />
      <div className="flex flex-1 min-h-0">
        <Dock />
        <div className="flex-1 min-w-0 flex flex-col">
          <TabStrip />
          <NavBar />
          <Bookmarks />
          <DocHeader />
          <div className="flex flex-1 min-h-0">
            <div className="w-[1243px] shrink-0 flex flex-col min-h-0">
              <Toolbar />
              <FormulaBar />
              <ColumnHeaders />
              <Grid />
              <HScroll />
              <SheetBar />
            </div>
            <SidePanel />
          </div>
        </div>
      </div>
    </div>
  );
}
